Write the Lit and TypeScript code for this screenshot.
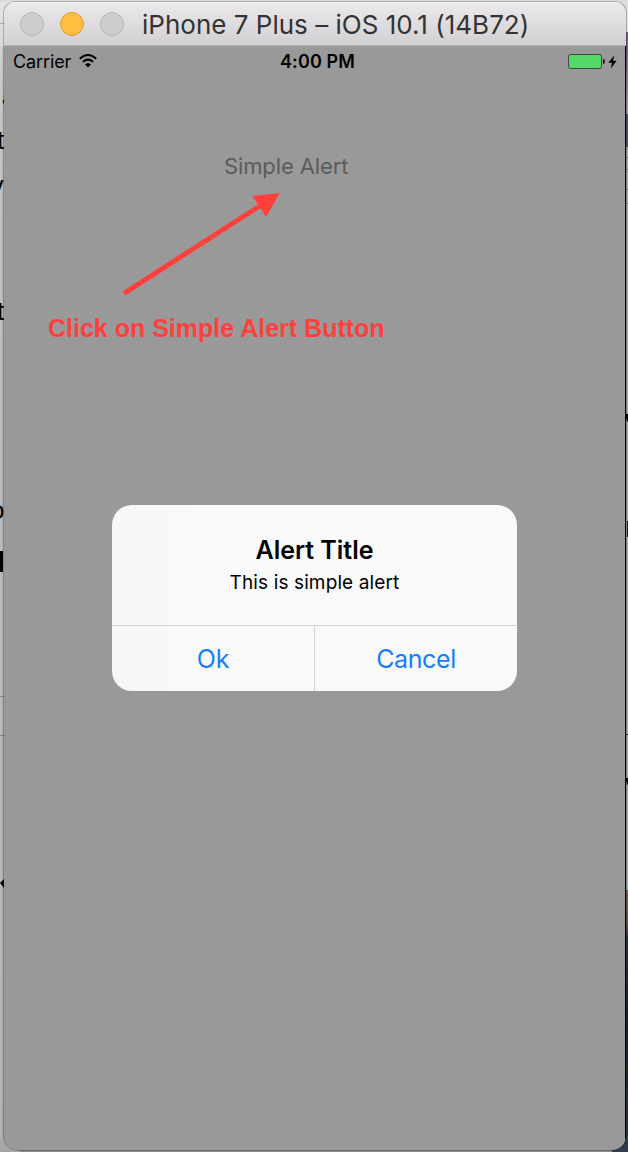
import { LitElement, html, css, svg } from "lit";
import { customElement } from "lit/decorators.js";

@customElement("desktop-backdrop")
class DesktopBackdrop extends LitElement {
  static styles = css`
    :host { display: block; }
    svg { display: block; }
    text { font-family: "Liberation Sans", Arial, sans-serif; fill: #000; }
  `;
  render() {
    return html`<svg width="628" height="1152" viewBox="0 0 628 1152">
      <defs>
        <linearGradient id="left" x1="0" y1="0" x2="0" y2="1">
          <stop offset="0" stop-color="#e4e4e4" />
          <stop offset="0.07" stop-color="#cecece" />
          <stop offset="0.2" stop-color="#c4c4c4" />
          <stop offset="1" stop-color="#b8b8b8" />
        </linearGradient>
        <linearGradient id="purple" x1="0" y1="0" x2="0" y2="1">
          <stop offset="0" stop-color="#705e6e" />
          <stop offset="1" stop-color="#a794a4" />
        </linearGradient>
        <linearGradient id="photo" x1="0" y1="0" x2="0" y2="1">
          <stop offset="0" stop-color="#7b5d50" />
          <stop offset="0.13" stop-color="#68534d" />
          <stop offset="0.18" stop-color="#303544" />
          <stop offset="0.5" stop-color="#1d2431" />
          <stop offset="1" stop-color="#303c50" />
        </linearGradient>
        <linearGradient id="edge" x1="0" x2="1">
          <stop offset="0" stop-color="#000" stop-opacity="0" />
          <stop offset="1" stop-color="#000" stop-opacity="0.13" />
        </linearGradient>
      </defs>
      <rect width="628" height="1152" fill="#dcdcdc" />
      <rect y="2" width="12" height="1150" fill="url(#left)" />
      <rect y="23" width="4" height="1" fill="#aaa" />
      ${[696, 735].map((y) => svg`<rect y=${y} width="4" height="1" fill="#898989" />`)}
      <text x="2" y="105" font-size="21">a</text>
      <text x="-3" y="149" font-size="26">t</text>
      <text x="-9" y="194" font-size="25">v</text>
      <text x="-3" y="320" font-size="26">t</text>
      <text x="-10" y="519" font-size="26">o</text>
      <rect y="551" width="3" height="21" />
      <path d="M0 883l4-4v9z" />
      <rect width="4" y="46" height="1106" fill="url(#edge)" />
      <rect x="620" y="32" width="8" height="82" fill="url(#purple)" />
      <rect x="626" y="114" width="2" height="33" fill="#56535f" />
      <rect x="626" y="147" width="2" height="743" fill="#a6a6a6" />
      ${[157, 169, 189, 203].map((y) => svg`<rect x="626" y=${y} width="2" height="1" fill="#777" />`)}
      <path d="M626 414h2v9l-2-5z" />
      <path d="M627 521h1v16h-1z" fill="#420805" />
      <path d="M626 734h2v1h-2z" fill="#222" />
      <path d="M626 778h2v8l-2-5z" />
      <rect x="600" y="890" width="28" height="262" fill="url(#photo)" />
      <rect x="0" y="1140" width="612" height="12" fill="#8c8c8c" />
      <rect x="0" y="1140" width="20" height="12" fill="#a6a6a6" />
    </svg>`;
  }
}

@customElement("title-bar")
class TitleBar extends LitElement {
  static styles = css`
    :host {
      display: flex; align-items: center; box-sizing: border-box; height: 44px; flex: none;
      padding: 1px 0 0 16px; gap: 16px;
      background: linear-gradient(#ebe9eb, #d2d0d2);
      border-bottom: 1px solid #b3b1b3; box-shadow: inset 0 1px #f6f5f6;
    }
    .dot { box-sizing: border-box; width: 24px; height: 24px; border-radius: 50%; background: #cecdce; border: 1px solid #b4b3b4; }
    .minimize { background: #fdbe41; border-color: #df9f38; }
    .title {
      margin-left: 2px; padding-top: 2px; white-space: nowrap; color: #333;
      font: 400 26px/32px Inter, sans-serif; letter-spacing: 0.01px;
    }
  `;
  render() {
    return html`<span class="dot"></span><span class="dot minimize"></span><span class="dot"></span>
      <span class="title">iPhone 7 Plus – iOS 10.1 (14B72)</span>`;
  }
}

@customElement("status-bar")
class StatusBar extends LitElement {
  static styles = css`
    :host {
      display: grid; grid-template-columns: 1fr auto 1fr; align-items: center;
      height: 32px; flex: none; padding: 0 8px 0 9px; color: #000;
      font: 400 18px/32px Inter, sans-serif;
    }
    .carrier { display: flex; align-items: center; gap: 8px; letter-spacing: -0.1px; }
    .time { font-weight: 600; letter-spacing: 0.1px; margin-left: 5px; }
    .power { display: flex; align-items: center; justify-content: flex-end; gap: 3px; }
    svg { display: block; }
    .carrier svg { margin-top: -2px; }
  `;
  render() {
    return html`
      <div class="carrier"><span>Carrier</span>
        <svg width="18" height="14" viewBox="0 0 18 14" fill="none" stroke="#000" stroke-width="2">
          <path d="M.8 4.7Q9-2.6 17.2 4.7" /><path d="M3.9 7.8Q9 3.4 14.1 7.8" />
          <path d="M9 13.5L6 10.5Q9 7.9 12 10.5Z" fill="#000" stroke="none" />
        </svg>
      </div>
      <div class="time">4:00 PM</div>
      <div class="power">
        <svg width="37" height="16" viewBox="0 0 37 16">
          <rect x=".5" y=".5" width="33" height="14" rx="2" fill="#53d769" stroke="#454545" />
          <path d="M35 5h.5q1.5 1 1.5 2.5T35.500 10H35z" fill="#111" />
        </svg>
        <svg width="9" height="14" viewBox="0 0 9 14"><path d="M6.200.2L.4 7.700H4L2.600 13.700 8.600 5.800H5z" /></svg>
      </div>`;
  }
}

@customElement("alert-dialog")
class AlertDialog extends LitElement {
  static styles = css`
    :host {
      display: flex; flex-direction: column; box-sizing: border-box; width: 405px; height: 186px;
      border-radius: 20px; overflow: hidden; color: #000; text-align: center;
      background: linear-gradient(90deg, #f6f6f6, #f9f9f9 20%, #f9f9f9);
      font-family: Inter, sans-serif;
    }
    .message { box-sizing: border-box; flex: none; height: 120px; padding-top: 29px; }
    .heading { font-size: 25px; line-height: 32px; font-weight: 600; letter-spacing: -0.03px; }
    .body { margin-top: 1px; font-size: 19px; line-height: 32px; letter-spacing: 0.12px; }
    .actions { display: flex; flex: 1; border-top: 1px solid #d3d4d8; }
    .action { flex: 1; font-size: 25px; line-height: 65px; padding-top: 1px; margin-bottom: -1px; color: #157efb; letter-spacing: -0.4px; }
    .action:first-child { letter-spacing: -0.1px; }
    .action + .action { border-left: 1px solid #d3d4d8; }
  `;
  render() {
    return html`
      <div class="message">
        <div class="heading">Alert Title</div>
        <div class="body">This is simple alert</div>
      </div>
      <div class="actions"><div class="action">Ok</div><div class="action">Cancel</div></div>`;
  }
}

@customElement("app-root")
class AppRoot extends LitElement {
  static styles = css`
    :host { display: block; position: relative; width: 628px; height: 1152px; overflow: hidden; }
    .backdrop { position: absolute; inset: 0; }
    .stage { position: relative; box-sizing: border-box; height: 1152px; padding: 2px 2px 2px 4px; }
    .window {
      display: flex; flex-direction: column; box-sizing: border-box; width: 622px; height: 1148px;
      border-radius: 11px 11px 14px 14px; overflow: hidden; background: #999;
      box-shadow: 0 0 0 1px rgba(0, 0, 0, 0.22);
    }
    .screen { display: flex; flex: 1; flex-direction: column; border-right: 1px solid #000; }
    .trigger {
      margin: 72px 0 0 220px; height: 32px; white-space: nowrap; color: #5c5c5c;
      font: 400 22px/32px Inter, sans-serif; letter-spacing: -0.12px;
    }
    .dialog { margin: 323px 0 0 108px; }
    .arrow { position: absolute; left: 110px; top: 180px; }
    .note {
      position: absolute; left: 48px; top: 313px; white-space: nowrap; color: #ff403d;
      font: 700 25px/30px "Liberation Sans", Arial, sans-serif;
    }
  `;
  render() {
    return html`
      <desktop-backdrop class="backdrop"></desktop-backdrop>
      <div class="stage">
        <div class="window">
          <title-bar></title-bar>
          <div class="screen">
            <status-bar></status-bar>
            <div class="trigger">Simple Alert</div>
            <alert-dialog class="dialog"></alert-dialog>
          </div>
        </div>
      </div>
      <svg class="arrow" width="180" height="125" viewBox="110 180 180 125">
        <path d="M124 293.300L262 204.500" stroke="#ff403d" stroke-width="5" />
        <path d="M280 193L252.500 196 266 217z" fill="#ff403d" />
      </svg>
      <div class="note">Click on Simple Alert Button</div>`;
  }
}
